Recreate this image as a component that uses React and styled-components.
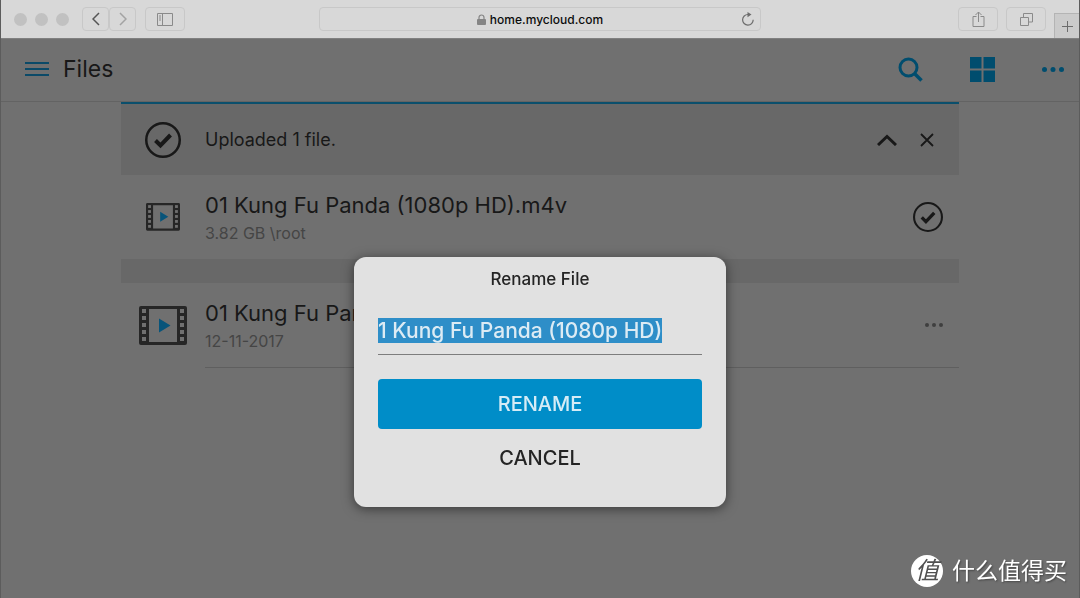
import { useEffect, useRef, useState } from 'react';
import styled, { createGlobalStyle } from 'styled-components';

const GlobalStyle = createGlobalStyle`
  * {
    box-sizing: border-box;
  }

  body {
    margin: 0;
    background: #707070;
    color: #181818;
    font-family: Inter, 'Noto Sans CJK SC', sans-serif;
  }

  button {
    padding: 0;
    border: 0;
    background: none;
    color: inherit;
    font-family: inherit;
    cursor: pointer;
  }

  svg {
    display: block;
  }
`;

const Window = styled.div`
  min-height: 100vh;
  border-left: 1px solid #5c5c5c;
  border-right: 1px solid #5c5c5c;
`;

const Toolbar = styled.div`
  display: grid;
  grid-template-columns: 1fr minmax(0, 442px) 1fr;
  align-items: center;
  height: 38px;
  background: #d8d8d8;
`;

const ToolbarSide = styled.div`
  display: flex;
  align-items: center;
  justify-content: ${(props) => (props.$end ? 'flex-end' : 'flex-start')};
  align-self: stretch;
  gap: ${(props) => (props.$end ? '8px' : '9px')};
  padding-left: 13px;
`;

const Lights = styled.div`
  display: flex;
  gap: 8px;
  margin-right: 4px;
`;

const Light = styled.span`
  width: 13px;
  height: 13px;
  border-radius: 50%;
  background: #c1c1c1;
`;

const NavButtons = styled.div`
  display: flex;
`;

const ToolButton = styled.button`
  display: flex;
  align-items: center;
  justify-content: center;
  width: ${(props) => (props.$wide ? '40px' : '27px')};
  height: 24px;
  border: 1px solid #c8c8c8;
  border-radius: 4px;
  color: ${(props) => props.$color || '#8a8a8a'};
`;

const NewTab = styled.button`
  display: flex;
  align-items: center;
  justify-content: center;
  align-self: flex-end;
  width: 25px;
  height: 25px;
  border-top: 1px solid #b4b4b4;
  border-left: 1px solid #b4b4b4;
  background: #cbcbcb;
  color: #6c6c6c;
`;

const AddressBar = styled.div`
  display: grid;
  grid-template-columns: 1fr auto 1fr;
  align-items: center;
  height: 24px;
  padding: 0 6px;
  border: 1px solid #c8c8c8;
  border-radius: 4px;
`;

const Address = styled.div`
  display: flex;
  grid-column: 2;
  align-items: center;
  gap: 4px;
  color: #0c0c0c;
  font-size: 12px;
  font-weight: 500;
`;

const Reload = styled.button`
  justify-self: end;
  color: #6c6c6c;
`;

const Header = styled.header`
  display: flex;
  align-items: center;
  height: 64px;
  padding: 0 15px 2px 24px;
  border-top: 1px solid #808080;
  border-bottom: 1px solid #636363;
`;

const Title = styled.h1`
  flex: 1;
  margin: 0 0 0 14px;
  font-size: 23px;
  font-weight: 400;
`;

const HeaderActions = styled.div`
  display: flex;
  align-items: center;
  gap: 47px;
  color: #004d6e;
`;

const IconButton = styled.button`
  display: flex;
  color: ${(props) => props.$color || 'inherit'};
`;

const Content = styled.main`
  max-width: 838px;
  margin: 0 auto;
`;

const UploadBar = styled.div`
  display: grid;
  grid-template-columns: 84px 1fr auto;
  align-items: center;
  height: 73px;
  padding-right: 22px;
  border-top: 2px solid #0b4f6c;
  background: #686868;
`;

const UploadText = styled.p`
  margin: 0;
  font-size: 18px;
`;

const UploadActions = styled.div`
  display: flex;
  align-items: center;
  gap: 20px;
`;

const IconCell = styled.div`
  display: flex;
  align-items: center;
  justify-content: center;
`;

const FileRow = styled.div`
  display: grid;
  grid-template-columns: 84px 1fr;
  min-height: 84px;
`;

const FileBody = styled.div`
  display: flex;
  align-items: center;
  justify-content: space-between;
  box-sizing: content-box;
  min-height: 84px;
  padding-right: 16px;
  border-bottom: ${(props) => (props.$divided ? '1px solid #5f5f5f' : '0')};
`;

const FileText = styled.div`
  padding-top: 4px;
`;

const FileName = styled.div`
  font-size: 22px;
  line-height: 28px;
`;

const FileMeta = styled.div`
  color: #454545;
  font-size: 16px;
  line-height: 28px;
`;

const Separator = styled.div`
  height: 24px;
  background: #686868;
`;

const Overlay = styled.div`
  position: fixed;
  inset: 0;
  display: flex;
  align-items: flex-start;
  justify-content: center;
  padding-top: 257px;
`;

const Modal = styled.form`
  display: flex;
  flex-direction: column;
  width: 372px;
  padding: 12px 24px 20px;
  border-radius: 12px;
  background: #e1e1e1;
  box-shadow: 0 2px 12px rgba(0, 0, 0, 0.5);
`;

const ModalTitle = styled.label`
  color: #242424;
  font-size: 17px;
  font-weight: 500;
  line-height: 20px;
  text-align: center;
`;

const NameInput = styled.input`
  width: 100%;
  height: 48px;
  margin: 18px 0 24px;
  padding: 0;
  border: 0;
  border-bottom: 1px solid #7d7d7d;
  border-radius: 0;
  outline: 0;
  background: none;
  color: #242424;
  font-family: inherit;
  font-size: 21px;
  font-weight: 500;

  &::selection {
    background: #2e8ec8;
    color: #dcebf4;
  }
`;

const ModalButton = styled.button`
  height: 50px;
  margin-bottom: 4px;
  border-radius: 4px;
  background: ${(props) => (props.$primary ? '#008dc8' : 'none')};
  color: ${(props) => (props.$primary ? '#d5ecf6' : '#242424')};
  font-size: 20px;
  font-weight: 500;
`;

const Watermark = styled.div`
  position: fixed;
  right: 13px;
  bottom: 11px;
  display: flex;
  align-items: center;
  gap: 9px;
  color: #fff;
  font-size: 23px;
  line-height: 32px;
  text-shadow: 1px 1px 2px rgba(0, 0, 0, 0.4);
`;

const WatermarkBadge = styled.span`
  width: 32px;
  height: 32px;
  border-radius: 50%;
  background: #fff;
  color: #505050;
  font-size: 24px;
  font-style: italic;
  text-align: center;
  text-shadow: none;
`;

function Dots({ width, radius }) {
  const height = radius * 2;
  return (
    <svg width={width} height={height} fill="currentColor">
      <circle cx={radius} cy={radius} r={radius} />
      <circle cx={width / 2} cy={radius} r={radius} />
      <circle cx={width - radius} cy={radius} r={radius} />
    </svg>
  );
}

function CheckCircle({ size, stroke }) {
  return (
    <svg width={size} height={size} viewBox="0 0 36 36" fill="none" stroke="currentColor">
      <circle cx="18" cy="18" r={18 - stroke / 2} strokeWidth={stroke} />
      <path d="M10.5 18.5l5 5 10-10.5" strokeWidth="4" />
    </svg>
  );
}

function FilmIcon({ width }) {
  const holes = [3, 10, 17, 24, 31];
  return (
    <svg width={width} height={(width * 39) / 48} viewBox="0 0 48 39">
      <path
        fill="#262626"
        fillRule="evenodd"
        d="M2 0h44a2 2 0 0 1 2 2v35a2 2 0 0 1-2 2H2a2 2 0 0 1-2-2V2a2 2 0 0 1 2-2zM10 3v33h28V3z"
      />
      {holes.map((y) => (
        <g key={y} fill="#707070">
          <rect x="3" y={y} width="4" height="4" />
          <rect x="41" y={y} width="4" height="4" />
        </g>
      ))}
      <path fill="#07547a" d="M20 12.500l11.500 7-11.500 7z" />
    </svg>
  );
}

function BrowserToolbar() {
  return (
    <Toolbar>
      <ToolbarSide>
        <Lights>
          <Light />
          <Light />
          <Light />
        </Lights>
        <NavButtons>
          <ToolButton aria-label="Back" $color="#555">
            <svg width="8" height="14" fill="none" stroke="currentColor" strokeWidth="1.500">
              <path d="M7 1L1 7l6 6" />
            </svg>
          </ToolButton>
          <ToolButton aria-label="Forward" $color="#a3a3a3">
            <svg width="8" height="14" fill="none" stroke="currentColor" strokeWidth="1.500">
              <path d="M1 1l6 6-6 6" />
            </svg>
          </ToolButton>
        </NavButtons>
        <ToolButton aria-label="Sidebar" $wide>
          <svg width="16" height="13" fill="none" stroke="currentColor">
            <path d="M.5.5h15v12H.5zM5.500.5v12M2 3h2M2 5h2M2 7h2" />
          </svg>
        </ToolButton>
      </ToolbarSide>
      <AddressBar>
        <Address>
          <svg width="9" height="11" fill="none" stroke="#858585">
            <rect x="0" y="5" width="9" height="6" rx="1" fill="#858585" stroke="none" />
            <path d="M2 5V3.500a2.500 2.500 0 0 1 5 0V5" strokeWidth="1.200" />
          </svg>
          home.mycloud.com
        </Address>
        <Reload aria-label="Reload">
          <svg width="13" height="14" fill="none" stroke="currentColor" strokeWidth="1.200">
            <path d="M7 2.500a5.300 5.300 0 1 0 5.200 5.300" />
            <path d="M6.500 0l4 2.600-4 2.600z" fill="currentColor" stroke="none" />
          </svg>
        </Reload>
      </AddressBar>
      <ToolbarSide $end>
        <ToolButton aria-label="Share" $wide>
          <svg width="13" height="16" fill="none" stroke="currentColor">
            <path d="M4.500 5.500H1v10h11v-10H8.500M6.500 11V1M3.500 4l3-3 3 3" />
          </svg>
        </ToolButton>
        <ToolButton aria-label="Show tabs" $wide>
          <svg width="13" height="13" fill="none" stroke="currentColor">
            <path d="M.5 4.500h8v8h-8zM3.500 4.500v-4h9v8.500h-4" />
          </svg>
        </ToolButton>
        <NewTab aria-label="New tab">
          <svg width="11" height="11" stroke="currentColor">
            <path d="M5.500 0v11M0 5.500h11" />
          </svg>
        </NewTab>
      </ToolbarSide>
    </Toolbar>
  );
}

function FileHeader() {
  return (
    <Header>
      <IconButton aria-label="Menu" $color="#0b4a68">
        <svg width="24" height="14" fill="currentColor">
          <path d="M0 0h24v2H0zM0 6h24v2H0zM0 12h24v2H0z" />
        </svg>
      </IconButton>
      <Title>Files</Title>
      <HeaderActions>
        <IconButton aria-label="Search">
          <svg width="25" height="25" fill="none" stroke="currentColor" strokeWidth="3">
            <circle cx="10.500" cy="10.500" r="8.500" />
            <path d="M16.500 16.500l7 7" strokeWidth="3.500" />
          </svg>
        </IconButton>
        <IconButton aria-label="Grid view">
          <svg width="25" height="25" fill="currentColor">
            <path d="M0 0h11.500v11.500H0zM13.500 0H25v11.500H13.500zM0 13.500h11.500V25H0zM13.500 13.500H25V25H13.500z" />
          </svg>
        </IconButton>
        <IconButton aria-label="More">
          <Dots width={22} radius={2.5} />
        </IconButton>
      </HeaderActions>
    </Header>
  );
}

function RenameModal() {
  const [name, setName] = useState('1 Kung Fu Panda (1080p HD)');
  const input = useRef(null);

  useEffect(() => {
    input.current.focus();
    input.current.select();
  }, []);

  return (
    <Overlay>
      <Modal role="dialog" onSubmit={(e) => e.preventDefault()}>
        <ModalTitle htmlFor="name">Rename File</ModalTitle>
        <NameInput
          id="name"
          ref={input}
          value={name}
          autoComplete="off"
          spellCheck="false"
          onChange={(e) => setName(e.target.value)}
        />
        <ModalButton type="submit" $primary>
          RENAME
        </ModalButton>
        <ModalButton type="button">CANCEL</ModalButton>
      </Modal>
    </Overlay>
  );
}

function App() {
  return (
    <Window>
      <GlobalStyle />
      <BrowserToolbar />
      <FileHeader />
      <Content>
        <UploadBar>
          <IconCell>
            <CheckCircle size={36} stroke={2.5} />
          </IconCell>
          <UploadText>Uploaded 1 file.</UploadText>
          <UploadActions>
            <IconButton aria-label="Collapse">
              <svg width="20" height="12" fill="none" stroke="currentColor" strokeWidth="3">
                <path d="M1 11l9-8.500 9 8.500" />
              </svg>
            </IconButton>
            <IconButton aria-label="Dismiss">
              <svg width="20" height="14" fill="none" stroke="currentColor" strokeWidth="1.800">
                <path d="M4 1l12 12M16 1L4 13" />
              </svg>
            </IconButton>
          </UploadActions>
        </UploadBar>
        <FileRow>
          <IconCell>
            <FilmIcon width={34} />
          </IconCell>
          <FileBody>
            <FileText>
              <FileName>01 Kung Fu Panda (1080p HD).m4v</FileName>
              <FileMeta>3.82 GB \root</FileMeta>
            </FileText>
            <CheckCircle size={30} stroke={2.5} />
          </FileBody>
        </FileRow>
        <Separator />
        <FileRow>
          <IconCell>
            <FilmIcon width={48} />
          </IconCell>
          <FileBody $divided>
            <FileText>
              <FileName>01 Kung Fu Panda (1080p HD).m4v</FileName>
              <FileMeta>12-11-2017</FileMeta>
            </FileText>
            <IconButton aria-label="File options" $color="#3f3f3f">
              <Dots width={18} radius={2} />
            </IconButton>
          </FileBody>
        </FileRow>
      </Content>
      <RenameModal />
      <Watermark>
        <WatermarkBadge>值</WatermarkBadge>
        什么值得买
      </Watermark>
    </Window>
  );
}

export default App;
